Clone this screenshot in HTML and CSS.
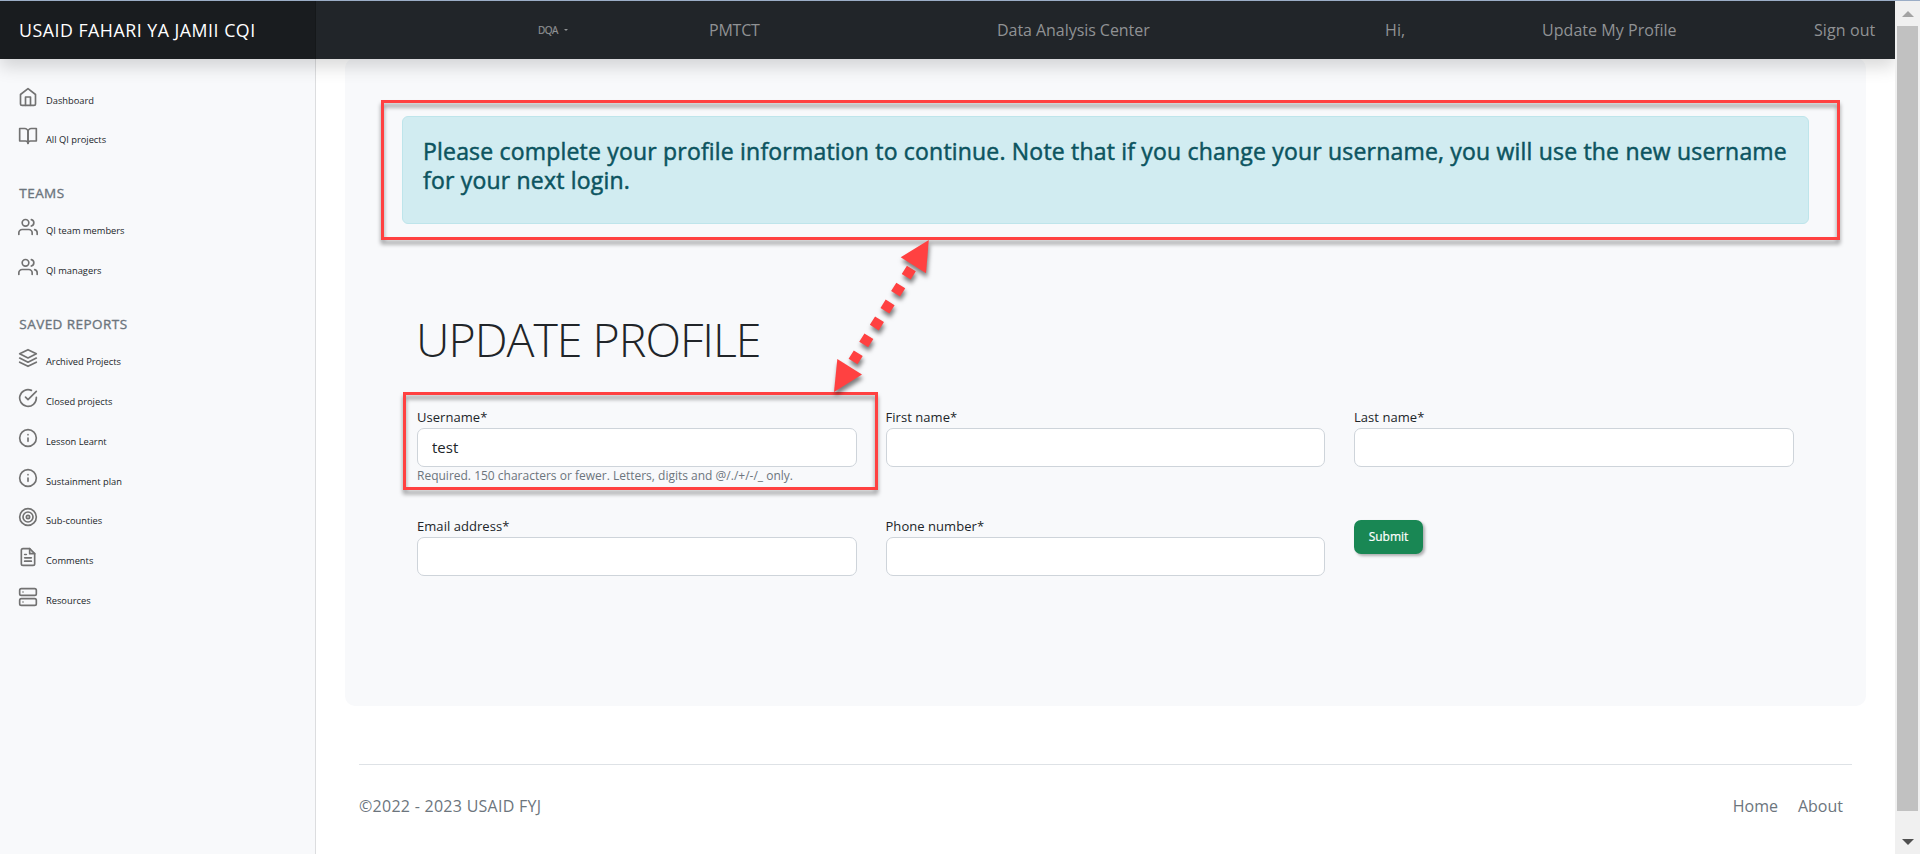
FILE: index.html
```
<!DOCTYPE html>
<html lang="en">
<head>
<meta charset="utf-8">
<title>Update profile</title>
<link rel="stylesheet" href="styles.css">
</head>
<body>
<svg class="defs" width="0" height="0">
  <symbol id="home" viewBox="0 0 24 24"><path d="M3 9l9-7 9 7v11a2 2 0 0 1-2 2H5a2 2 0 0 1-2-2z"/><polyline points="9 22 9 12 15 12 15 22"/></symbol>
  <symbol id="book" viewBox="0 0 24 24"><path d="M2 3h6a4 4 0 0 1 4 4v14a3 3 0 0 0-3-3H2z"/><path d="M22 3h-6a4 4 0 0 0-4 4v14a3 3 0 0 1 3-3h7z"/></symbol>
  <symbol id="users" viewBox="0 0 24 24"><path d="M17 21v-2a4 4 0 0 0-4-4H5a4 4 0 0 0-4 4v2"/><circle cx="9" cy="7" r="4"/><path d="M23 21v-2a4 4 0 0 0-3-3.87"/><path d="M16 3.13a4 4 0 0 1 0 7.75"/></symbol>
  <symbol id="layers" viewBox="0 0 24 24"><polygon points="12 2 2 7 12 12 22 7 12 2"/><polyline points="2 17 12 22 22 17"/><polyline points="2 12 12 17 22 12"/></symbol>
  <symbol id="check" viewBox="0 0 24 24"><path d="M22 11.08V12a10 10 0 1 1-5.93-9.14"/><polyline points="22 4 12 14.01 9 11.01"/></symbol>
  <symbol id="info" viewBox="0 0 24 24"><circle cx="12" cy="12" r="10"/><line x1="12" y1="16" x2="12" y2="12"/><line x1="12" y1="8" x2="12.01" y2="8"/></symbol>
  <symbol id="target" viewBox="0 0 24 24"><circle cx="12" cy="12" r="10"/><circle cx="12" cy="12" r="6"/><circle cx="12" cy="12" r="2"/></symbol>
  <symbol id="file" viewBox="0 0 24 24"><path d="M14 2H6a2 2 0 0 0-2 2v16a2 2 0 0 0 2 2h12a2 2 0 0 0 2-2V8z"/><polyline points="14 2 14 8 20 8"/><line x1="16" y1="13" x2="8" y2="13"/><line x1="16" y1="17" x2="8" y2="17"/><polyline points="10 9 9 9 8 9"/></symbol>
  <symbol id="server" viewBox="0 0 24 24"><rect x="2" y="2" width="20" height="8" rx="2"/><rect x="2" y="14" width="20" height="8" rx="2"/><line x1="6" y1="6" x2="6.01" y2="6"/><line x1="6" y1="18" x2="6.01" y2="18"/></symbol>
</svg>
<div class="window">
  <div class="page">
    <header class="topbar">
      <div class="brand"><span>USAID FAHARI YA JAMII CQI</span></div>
      <nav class="nav">
        <a class="dqa">DQA<i class="caret"></i></a>
        <a class="pmtct">PMTCT</a>
        <a class="data">Data Analysis Center</a>
        <a class="hi">Hi,</a>
        <a class="update">Update My Profile</a>
        <a class="signout">Sign out</a>
      </nav>
    </header>
    <div class="body">
      <aside class="sidebar">
        <a class="item"><svg><use href="#home"/></svg><span>Dashboard</span></a>
        <a class="item"><svg><use href="#book"/></svg><span>All QI projects</span></a>
        <h6 class="group">TEAMS</h6>
        <a class="item"><svg><use href="#users"/></svg><span>QI team members</span></a>
        <a class="item"><svg><use href="#users"/></svg><span>QI managers</span></a>
        <h6 class="group">SAVED REPORTS</h6>
        <a class="item"><svg><use href="#layers"/></svg><span>Archived Projects</span></a>
        <a class="item"><svg><use href="#check"/></svg><span>Closed projects</span></a>
        <a class="item"><svg><use href="#info"/></svg><span>Lesson Learnt</span></a>
        <a class="item"><svg><use href="#info"/></svg><span>Sustainment plan</span></a>
        <a class="item"><svg><use href="#target"/></svg><span>Sub-counties</span></a>
        <a class="item"><svg><use href="#file"/></svg><span>Comments</span></a>
        <a class="item"><svg><use href="#server"/></svg><span>Resources</span></a>
      </aside>
      <main class="main">
        <section class="panel">
          <div class="alert">Please complete your profile information to continue. Note that if you change your username, you will use the new username<br>for your next login.</div>
          <h1 class="title">UPDATE PROFILE</h1>
          <form class="form">
            <div class="field">
              <label for="username">Username*</label>
              <input id="username" type="text" value="test">
              <small>Required. 150 characters or fewer. Letters, digits and @/./+/-/_ only.</small>
            </div>
            <div class="field"><label for="first">First name*</label><input id="first" type="text"></div>
            <div class="field"><label for="last">Last name*</label><input id="last" type="text"></div>
            <div class="field"><label for="email">Email address*</label><input id="email" type="text"></div>
            <div class="field"><label for="phone">Phone number*</label><input id="phone" type="text"></div>
            <div class="field"><button class="submit" type="button">Submit</button></div>
          </form>
        </section>
        <footer class="footer">
          <span class="copy">©2022 - 2023 USAID FYJ</span>
          <span class="links"><a>Home</a><a>About</a></span>
        </footer>
      </main>
    </div>
  </div>
  <div class="scrollbar"><i class="up"></i><div class="thumb"></div><i class="down"></i></div>
</div>
<div class="mark mark-alert"></div>
<div class="mark mark-user"></div>
<svg class="arrow" width="120" height="180" viewBox="820 230 120 180">
  <line x1="911.4" y1="268.5" x2="853" y2="361.6"/>
  <polygon points="928.8,240 900.7,257.3 926,273.3"/>
  <polygon points="834,392 837.3,359 862,374.5"/>
</svg>
</body>
</html>
```
FILE: styles.css
```
* { box-sizing: border-box; }
body {
  margin: 0;
  width: 1920px;
  height: 854px;
  overflow: hidden;
  background: #fff;
  font-family: "Open Sans", "Noto Sans", sans-serif;
  color: #212529;
}
.defs { position: absolute; }
.window { display: flex; height: 854px; border-top: 1px solid #9badc6; }
.page { width: 1895px; display: flex; flex-direction: column; overflow: hidden; }

/* top bar */
.topbar {
  position: relative;
  z-index: 2;
  flex: none;
  display: flex;
  height: 58px;
  background: #212529;
  box-shadow: 0 8px 16px rgba(0, 0, 0, .15);
}
.brand {
  width: 316px;
  padding-left: 19px;
  background: #191c1f;
  border-right: 1px solid #15181a;
  color: #fff;
  font-size: 17.8px;
  line-height: 58px;
  letter-spacing: .5px;
  white-space: nowrap;
}
.nav {
  flex: 1;
  display: grid;
  grid-template-columns: 171px 288px 388px 157px 272px 1fr;
  padding-left: 222px;
  color: #909294;
  font-size: 16px;
  line-height: 58px;
  white-space: nowrap;
}
.dqa { font-size: 10px; letter-spacing: -.5px; -webkit-text-stroke: .2px; }
.caret {
  display: inline-block;
  margin-left: 6px;
  vertical-align: 3px;
  border: 2.5px solid transparent;
  border-top-color: #909294;
  border-bottom: 0;
}
.pmtct { letter-spacing: -.2px; }
.data { letter-spacing: -.05px; }
.update { letter-spacing: .05px; }
.signout, .hi { letter-spacing: .1px; }

/* sidebar */
.body { display: flex; flex: 1; }
.sidebar {
  width: 316px;
  padding: 17.6px 0 0 18.3px;
  background: #f8f9fb;
  border-right: 1px solid #dcdddf;
}
.item { display: flex; height: 39.85px; font-size: 9.3px; color: #212529; }
.item svg {
  width: 20px;
  height: 20px;
  margin-top: 10px;
  fill: none;
  stroke: #727272;
  stroke-width: 2;
  stroke-linecap: round;
  stroke-linejoin: round;
}
.item span { margin: 17px 0 0 7.7px; line-height: 14px; white-space: nowrap; }
.group {
  margin: 27px 0 3px 1px;
  height: 21px;
  font-size: 13.5px;
  font-weight: 400;
  letter-spacing: .45px;
  line-height: 21px;
  color: #6c757d;
  -webkit-text-stroke: .35px;
}

/* content */
.main { flex: 1; padding: 0 29px; }
.panel {
  height: 648px;
  margin-top: -1px;
  padding: 58px 57px 0;
  border-radius: 10px;
  background: #f8f9fb;
}
.alert {
  height: 108px;
  padding: 20px;
  border: 1px solid #bee5eb;
  border-radius: 6px;
  background: #d1ecf1;
  color: #0c5460;
  font-size: 23px;
  letter-spacing: .19px;
  line-height: 28.8px;
  white-space: nowrap;
  -webkit-text-stroke: .5px;
}
.title {
  margin: 86px 0 0 14px;
  font-size: 46.5px;
  font-weight: 300;
  letter-spacing: -1px;
  line-height: 58px;
  white-space: nowrap;
}
.form {
  display: grid;
  grid-template-columns: repeat(3, 439.5px);
  grid-template-rows: 109px 80px;
  column-gap: 29px;
  margin: 38.5px 0 0 15px;
}
.field { display: flex; flex-direction: column; align-items: flex-start; }
.field label { height: 21px; font-size: 13px; letter-spacing: .05px; line-height: 21px; }
.field input {
  width: 100%;
  height: 39.5px;
  padding: 0 14px;
  border: 1px solid #ced4da;
  border-radius: 7px;
  background: #fff;
  font: 15px "Open Sans", "Noto Sans", sans-serif;
  color: #212529;
}
.field small { font-size: 12px; line-height: 18px; color: #6c757d; white-space: nowrap; }
.submit {
  width: 69px;
  height: 34px;
  margin-top: 4px;
  padding: 0;
  border: 0;
  border-radius: 7px;
  background: #198754;
  box-shadow: 2px 2px 3px rgba(0, 0, 0, .3);
  color: #fff;
  font: 12px "Open Sans", "Noto Sans", sans-serif;
  -webkit-text-stroke: .2px;
}
.footer {
  display: flex;
  justify-content: space-between;
  margin: 58px 14px 0;
  padding: 26px 9px 0 0;
  border-top: 1px solid #dee2e6;
  font-size: 16px;
  line-height: 30px;
  color: #6c757d;
}
.copy { letter-spacing: .27px; }
.links { display: flex; gap: 20px; }

/* window scrollbar */
.scrollbar {
  width: 25px;
  display: flex;
  flex-direction: column;
  align-items: center;
  background: #f0f0f0;
}
.up { margin: 10px 0 9px; border: 6px solid transparent; border-top: 0; border-bottom-color: #a3a3a3; }
.thumb { width: 21px; height: 785px; background: #c1c1c1; }
.down { margin-top: 28px; border: 6px solid transparent; border-bottom: 0; border-top-color: #505050; }

/* callouts drawn over the page */
.mark {
  position: absolute;
  z-index: 3;
  border: 3px solid #ff4141;
  filter: drop-shadow(0 4px 2px rgba(0, 0, 0, .42));
}
.mark-alert { left: 381px; top: 100px; width: 1459px; height: 140px; }
.mark-user { left: 403px; top: 392px; width: 475px; height: 98px; }
.arrow {
  position: absolute;
  z-index: 4;
  left: 820px;
  top: 230px;
  fill: #ff4141;
  filter: drop-shadow(1px 4px 2px rgba(0, 0, 0, .5));
}
.arrow line { stroke: #ff4141; stroke-width: 10.5; stroke-dasharray: 9.8 10.2; }
```
